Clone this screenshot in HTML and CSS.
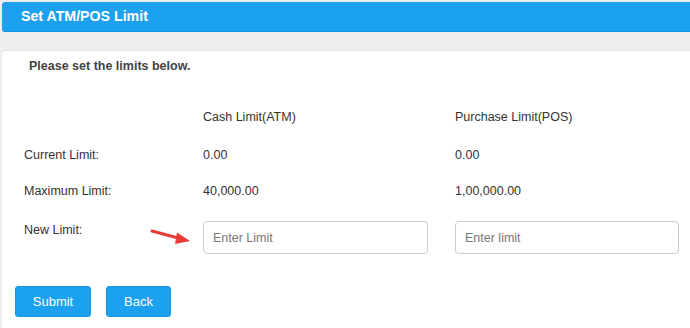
FILE: index.html
```html
<!DOCTYPE html>
<html>
<head>
<meta charset="utf-8">
<link rel="stylesheet" href="styles.css">
</head>
<body>
<div class="header"><h1 class="title">Set ATM/POS Limit</h1></div>
<div class="card">
  <p class="intro">Please set the limits below.</p>
  <div class="row row-head">
    <span></span>
    <span>Cash Limit(ATM)</span>
    <span>Purchase Limit(POS)</span>
  </div>
  <div class="row row-current">
    <span>Current Limit:</span>
    <span>0.00</span>
    <span>0.00</span>
  </div>
  <div class="row row-max">
    <span>Maximum Limit:</span>
    <span>40,000.00</span>
    <span>1,00,000.00</span>
  </div>
  <div class="row row-new">
    <span class="new-label">New Limit:</span>
    <input class="field" type="text" placeholder="Enter Limit">
    <input class="field" type="text" placeholder="Enter limit">
    <svg class="arrow" width="48" height="20" viewBox="0 0 48 20">
      <line x1="2" y1="3" x2="30" y2="10.5" stroke="#ea3b36" stroke-width="3" stroke-linecap="round"/>
      <polygon points="40,13 27,4.5 25,16" fill="#ea3b36"/>
    </svg>
  </div>
  <div class="actions">
    <button class="btn btn-submit">Submit</button>
    <button class="btn btn-back">Back</button>
  </div>
</div>
</body>
</html>
```
FILE: styles.css
```css
html, body {
  margin: 0;
  padding: 0;
  background: #eeeeee;
  font-family: "Liberation Sans", Arial, sans-serif;
  font-size: 12.5px;
  color: #333;
  height: 100%;
}
body {
  padding-top: 2px;
  box-sizing: border-box;
}
.header {
  margin-left: 2px;
  height: 29px;
  background: #1ca1ef;
  border-bottom: 1px solid #1590dc;
  border-radius: 3px 0 0 3px;
}
.title {
  margin: 0;
  padding-left: 19px;
  font-size: 14.2px;
  font-weight: bold;
  color: #fff;
  line-height: 28px;
}
.card {
  margin-top: 18px;
  margin-left: 2px;
  background: #fff;
  border-top: 1px solid #e3e3e3;
  border-radius: 4px 0 0 0;
  height: 278px;
  box-sizing: border-box;
  padding-top: 8px;
}
.intro {
  margin: 0 0 0 27px;
  font-weight: bold;
  color: #444;
  line-height: 14px;
}
.row {
  display: grid;
  grid-template-columns: 152px 225px 224px;
  column-gap: 27px;
  padding-left: 22px;
  line-height: 14px;
  position: relative;
}
.row-head { margin-top: 37px; }
.row-current { margin-top: 24px; }
.row-max { margin-top: 22px; }
.row-new { margin-top: 23px; }
.new-label { padding-top: 2px; }
.field {
  box-sizing: border-box;
  height: 33px;
  border: 1px solid #cccccc;
  border-radius: 4px;
  padding: 0 9px;
  font-family: "Liberation Sans", Arial, sans-serif;
  font-size: 12.5px;
  color: #333;
  outline: none;
}
.field::placeholder { color: #777; }
.arrow {
  position: absolute;
  left: 148px;
  top: 7px;
}
.actions {
  display: flex;
  gap: 15px;
  margin-top: 32px;
  padding-left: 13px;
}
.btn {
  height: 31px;
  border: 1px solid #1a96e3;
  border-radius: 3px;
  background: #1ca1ef;
  color: #fff;
  font-family: "Liberation Sans", Arial, sans-serif;
  font-size: 13px;
  padding: 0;
}
.btn-submit { width: 76px; }
.btn-back { width: 65px; }
```
